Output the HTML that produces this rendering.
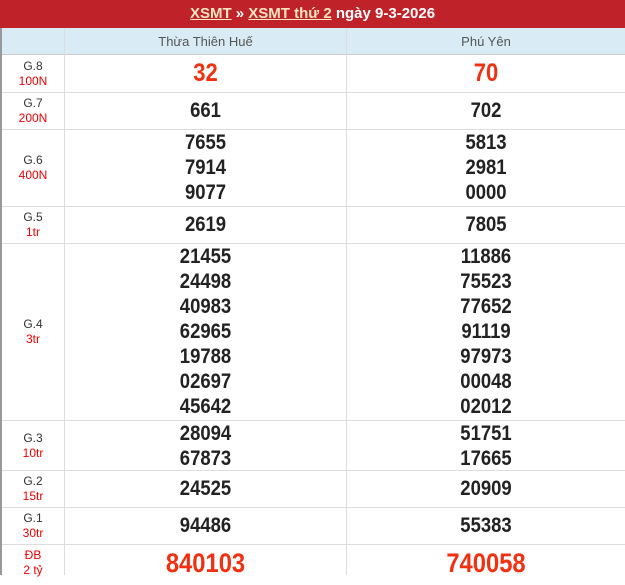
<!DOCTYPE html>
<html><head><meta charset="utf-8"><style>
*{margin:0;padding:0;box-sizing:border-box}
body{width:625px;height:575px;overflow:hidden;background:#fff;font-family:"Liberation Sans",Arial,sans-serif;position:relative}
.hd{position:absolute;left:0;top:0;width:625px;height:28px;background:#bf2228;color:#fff;font-weight:bold;font-size:15px;text-align:center;line-height:27px}
.hd u{color:#fce6c0;text-decoration:underline}
.lb{position:absolute;left:0;top:28px;width:2px;height:547px;background:#999}
.vl{position:absolute;top:28px;width:1px;height:547px;background:#ddd}
.th{position:absolute;top:28px;left:2px;width:623px;height:27px;background:#d9ebf5;border-bottom:1px solid #ccc}
.th span{position:absolute;top:0;line-height:27px;font-size:13px;color:#555;text-align:center}
.row{position:absolute;left:2px;width:623px;border-bottom:1px solid #ddd}
.g{position:absolute;left:0;width:62px;text-align:center;font-size:12px;line-height:15px;color:#333}
.g b{font-weight:normal;color:#e00;display:block}
.c{position:absolute;text-align:center;font-weight:bold;font-size:21px;color:#222;line-height:25px;transform:scaleX(.88)}
.c1{left:63px;width:281px}.c2{left:345px;width:278px}
.r{color:#f03010;font-size:25px}
.db{color:#f03010;font-size:27px}
</style></head><body>
<div class="hd"><u>XSMT</u> » <u>XSMT thứ 2</u> ngày 9-3-2026</div>
<div class="th"><span style="left:63px;width:281px">Thừa Thiên Huế</span><span style="left:345px;width:278px">Phú Yên</span></div>
<div class="lb"></div>
<div class="vl" style="left:64px"></div>
<div class="vl" style="left:346px"></div>

<div class="row" style="top:56px;height:37px"><div class="g" style="top:3px">G.8<b>100N</b></div><div class="c c1 r" style="top:5px">32</div><div class="c c2 r" style="top:5px">70</div></div>
<div class="row" style="top:93px;height:37px"><div class="g" style="top:3px">G.7<b>200N</b></div><div class="c c1" style="top:5px">661</div><div class="c c2" style="top:5px">702</div></div>
<div class="row" style="top:130px;height:77px"><div class="g" style="top:23px">G.6<b>400N</b></div><div class="c c1" style="top:0">7655<br>7914<br>9077</div><div class="c c2" style="top:0">5813<br>2981<br>0000</div></div>
<div class="row" style="top:207px;height:37px"><div class="g" style="top:3px">G.5<b>1tr</b></div><div class="c c1" style="top:5px">2619</div><div class="c c2" style="top:5px">7805</div></div>
<div class="row" style="top:244px;height:177px"><div class="g" style="top:73px">G.4<b>3tr</b></div><div class="c c1" style="top:0">21455<br>24498<br>40983<br>62965<br>19788<br>02697<br>45642</div><div class="c c2" style="top:0">11886<br>75523<br>77652<br>91119<br>97973<br>00048<br>02012</div></div>
<div class="row" style="top:421px;height:50px"><div class="g" style="top:10px">G.3<b>10tr</b></div><div class="c c1" style="top:0">28094<br>67873</div><div class="c c2" style="top:0">51751<br>17665</div></div>
<div class="row" style="top:471px;height:37px"><div class="g" style="top:3px">G.2<b>15tr</b></div><div class="c c1" style="top:5px">24525</div><div class="c c2" style="top:5px">20909</div></div>
<div class="row" style="top:508px;height:37px"><div class="g" style="top:3px">G.1<b>30tr</b></div><div class="c c1" style="top:5px">94486</div><div class="c c2" style="top:5px">55383</div></div>
<div class="row" style="top:545px;height:40px;border:none"><div class="g" style="top:3px;color:#e00">ĐB<b>2 tỷ</b></div><div class="c c1 db" style="top:6px">840103</div><div class="c c2 db" style="top:6px">740058</div></div>
</body></html>
